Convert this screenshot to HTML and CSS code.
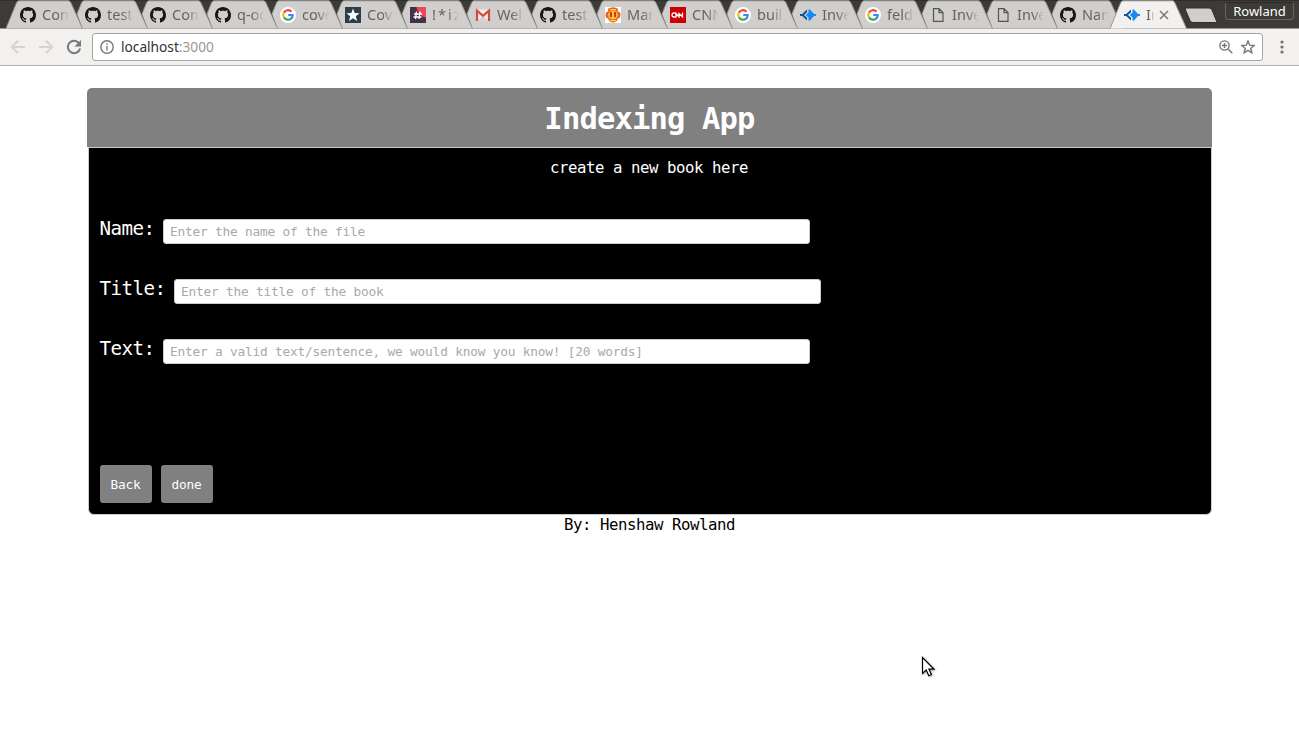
FILE: index.html
```html
<!DOCTYPE html>
<html lang="en">
<head>
<meta charset="utf-8">
<title>Indexing App</title>
<link rel="stylesheet" href="styles.css">
</head>
<body>
<svg class="defs" width="0" height="0">
  <symbol id="tab" viewBox="0 0 78 29"><path d="M0 28.500L10.500 3Q11.500 .8 13 .8H62.500Q64 .8 65 3L76.500 28.500"/></symbol>
  <symbol id="github" viewBox="0 0 16 16"><path fill="#181616" d="M8 0C3.580 0 0 3.580 0 8c0 3.540 2.290 6.530 5.470 7.590.4.070.55-.17.55-.38 0-.19-.01-.82-.01-1.490-2.010.37-2.530-.49-2.690-.94-.09-.23-.48-.94-.82-1.130-.28-.15-.68-.52-.01-.53.63-.01 1.080.58 1.230.82.72 1.210 1.870.87 2.330.66.070-.52.28-.87.51-1.070-1.780-.2-3.640-.89-3.640-3.950 0-.87.31-1.590.82-2.150-.08-.2-.36-1.020.08-2.120 0 0 .67-.21 2.200.82.640-.18 1.320-.27 2-.27s1.360.09 2 .27c1.530-1.040 2.200-.82 2.200-.82.440 1.100.160 1.920.080 2.120.510.560.820 1.270.820 2.150 0 3.070-1.870 3.750-3.650 3.950.290.250.540.730.540 1.480 0 1.070-.01 1.930-.01 2.200 0 .210.150.460.550.380A8.010 8.010 0 0 0 16 8c0-4.420-3.580-8-8-8z"/></symbol>
  <symbol id="google" viewBox="0 0 16 16"><circle cx="8" cy="8" r="8" fill="#fff"/><g fill="none" stroke-width="2.200"><path stroke="#ea4335" d="M3.900 5.600A4.700 4.700 0 0 1 11.400 4.700"/><path stroke="#fbbc05" d="M3.900 10.300A4.700 4.700 0 0 1 3.900 5.600"/><path stroke="#34a853" d="M11.200 11.500A4.700 4.700 0 0 1 3.900 10.300"/><path stroke="#4285f4" d="M8.200 8H12.700A4.700 4.700 0 0 1 11 11.700"/></g></symbol>
  <symbol id="star" viewBox="0 0 16 16"><path fill="#2c3e4a" d="M0 0h16v16H0z"/><path fill="#fff" d="M8 1.500l1.700 4.500 4.800.2-3.700 3 1.300 4.700L8 11.200l-4.100 2.700 1.300-4.700-3.700-3 4.800-.2z"/></symbol>
  <symbol id="hash" viewBox="0 0 16 16"><path fill="#453145" d="M0 0h16v16H0z"/><path fill="#ec4758" d="M6.500 0H16v10.500C12 10 8 7 6.500 0z"/><path d="M6.500 4.500L5.500 12M10 4.500L9 12M4 7h8M3.500 10h8" stroke="#fff" stroke-width="1.400"/></symbol>
  <symbol id="gmail" viewBox="0 0 16 16"><path fill="#eee" d="M1 2.500h14v11H1z"/><path fill="#d2d2d2" d="M3 13.500L8 9l5 4.500z"/><path fill="none" stroke="#d6493b" stroke-width="2.200" d="M2 14V3.600L8 8.800l6-5.200V14"/></symbol>
  <symbol id="united" viewBox="0 0 16 16"><path fill="#fff" d="M0 0h16v16H0z"/><path fill="#e8602a" d="M3 1.800Q8-1.200 13 1.800L12.700 4.500Q15.800 4.500 15.500 8T12.800 11.500Q12 15.500 8 15.500T3.200 11.500Q.5 11.500.5 8T3.300 4.500z"/><ellipse cx="8" cy="8" rx="5" ry="4.500" fill="#fdb52e"/><path fill="#d63621" d="M5 5h2v5H5zM9 5h2v5H9z"/><path fill="#ffd53c" d="M7 4h2v7.500H7zM5 2h6v1.200H5zM5 13h6v1.200H5z"/></symbol>
  <symbol id="cnn" viewBox="0 0 16 16"><path fill="#c00" d="M0 0h16v16H0z"/><path fill="none" stroke="#fff" stroke-width="1.300" d="M5.500 6H4Q2 6 2 8t2 2H6V6.500L9 9.800V6.500L12.500 9.800V5.500"/></symbol>
  <symbol id="diamond" viewBox="0 0 16 16"><path fill="#07559f" d="M0 7h2.200L7 2.500v2.700L4 8l3 2.800v2.700L2.200 9H0z"/><path fill="#168af0" d="M9.500 2L14 7h2v2h-2l-4.500 5L8.500 13v-2.500L5.800 8 8.500 5.500V3z"/></symbol>
  <symbol id="page" viewBox="0 0 16 16"><path fill="none" stroke="#555" stroke-width="1.200" d="M3.500 1.600h5.500l4 4v8.800H3.500zM9 1.600v4h4"/></symbol>
</svg>

<div class="tabstrip">
  <div class="tab"><svg class="shape"><use href="#tab"/></svg><svg class="icon"><use href="#github"/></svg><span>Com</span></div>
  <div class="tab"><svg class="shape"><use href="#tab"/></svg><svg class="icon"><use href="#github"/></svg><span>test</span></div>
  <div class="tab"><svg class="shape"><use href="#tab"/></svg><svg class="icon"><use href="#github"/></svg><span>Com</span></div>
  <div class="tab"><svg class="shape"><use href="#tab"/></svg><svg class="icon"><use href="#github"/></svg><span>q-oc</span></div>
  <div class="tab"><svg class="shape"><use href="#tab"/></svg><svg class="icon"><use href="#google"/></svg><span>cove</span></div>
  <div class="tab"><svg class="shape"><use href="#tab"/></svg><svg class="icon"><use href="#star"/></svg><span>Cov</span></div>
  <div class="tab"><svg class="shape"><use href="#tab"/></svg><svg class="icon"><use href="#hash"/></svg><span class="spaced">!*iz</span></div>
  <div class="tab"><svg class="shape"><use href="#tab"/></svg><svg class="icon"><use href="#gmail"/></svg><span>Wel</span></div>
  <div class="tab"><svg class="shape"><use href="#tab"/></svg><svg class="icon"><use href="#github"/></svg><span>test</span></div>
  <div class="tab"><svg class="shape"><use href="#tab"/></svg><svg class="icon"><use href="#united"/></svg><span>Man</span></div>
  <div class="tab"><svg class="shape"><use href="#tab"/></svg><svg class="icon"><use href="#cnn"/></svg><span>CNN</span></div>
  <div class="tab"><svg class="shape"><use href="#tab"/></svg><svg class="icon"><use href="#google"/></svg><span>buil</span></div>
  <div class="tab"><svg class="shape"><use href="#tab"/></svg><svg class="icon"><use href="#diamond"/></svg><span>Inve</span></div>
  <div class="tab"><svg class="shape"><use href="#tab"/></svg><svg class="icon"><use href="#google"/></svg><span>feld</span></div>
  <div class="tab"><svg class="shape"><use href="#tab"/></svg><svg class="icon"><use href="#page"/></svg><span>Inve</span></div>
  <div class="tab"><svg class="shape"><use href="#tab"/></svg><svg class="icon"><use href="#page"/></svg><span>Inve</span></div>
  <div class="tab"><svg class="shape"><use href="#tab"/></svg><svg class="icon"><use href="#github"/></svg><span>Nan</span></div>
  <div class="tab active"><svg class="shape"><use href="#tab"/></svg><svg class="icon"><use href="#diamond"/></svg><span>In</span><svg class="close" viewBox="0 0 10 10"><path d="M1 1l8 8M9 1L1 9"/></svg></div>
  <svg class="newtab" viewBox="0 0 34 17"><path d="M2.500 1H25Q27 1 28 3l4.500 11q.5 1.500-1 1.500H9Q7 15.500 6 13.500L1.500 3Q1 1 2.500 1z"/></svg>
  <div class="user">Rowland</div>
</div>

<div class="toolbar">
  <svg class="nav off" viewBox="0 0 16 16"><path d="M15 8H2M8 1.800L1.800 8 8 14.200"/></svg>
  <svg class="nav off" viewBox="0 0 16 16"><path d="M1 8h13M8 1.800L14.200 8 8 14.200"/></svg>
  <svg class="nav" viewBox="0 0 16 16"><path d="M13.200 4.500A6.200 6.200 0 1 0 14.100 9.500"/><path class="solid" d="M15 1v6.500H8.500z"/></svg>
  <div class="omnibox">
    <svg class="info" viewBox="0 0 14 14"><circle cx="7" cy="7" r="6.200"/><path d="M7 6v4.500M7 3.300v1.500"/></svg>
    <div class="url">localhost<em>:3000</em></div>
    <svg class="tool" viewBox="0 0 14 14"><circle cx="5.500" cy="5.500" r="4.600"/><path d="M9 9l4.300 4.300M3 5.500h5M5.500 3v5"/></svg>
    <svg class="tool fav" viewBox="0 0 14 14"><path d="M7 1l1.700 4.200 4.500.3-3.500 2.900 1.200 4.400L7 10.400l-3.900 2.400 1.200-4.400L.8 5.500l4.500-.3z"/></svg>
  </div>
  <svg class="menu" viewBox="0 0 4 14"><circle cx="2" cy="2" r="1.600"/><circle cx="2" cy="7" r="1.600"/><circle cx="2" cy="12" r="1.600"/></svg>
</div>

<main class="app">
  <h1 class="title">Indexing App</h1>
  <form class="panel">
    <p class="lead">create a new book here</p>
    <label class="row"><span class="name">Name:</span><input type="text" placeholder="Enter the name of the file"></label>
    <label class="row"><span class="name">Title:</span><input type="text" placeholder="Enter the title of the book"></label>
    <label class="row"><span class="name">Text:</span><input type="text" placeholder="Enter a valid text/sentence, we would know you know! [20 words]"></label>
    <div class="actions"><button type="button">Back</button><button type="button">done</button></div>
  </form>
  <footer class="by">By: Henshaw Rowland</footer>
</main>
<svg class="cursor" viewBox="0 0 14 22"><path d="M1.500 1.500v16l3.700-3.400 2.600 5.600 2.600-1.200-2.500-5.400h5z"/></svg>
</body>
</html>
```

FILE: styles.css
```css
* { box-sizing: border-box; }
body {
  margin: 0;
  height: 744px;
  overflow: hidden;
  background: #fff;
  font-family: "DejaVu Sans Mono", monospace;
}
.defs { position: absolute; }

/* Tab strip */
.tabstrip {
  display: flex;
  height: 29px;
  padding-left: 6px;
  background: linear-gradient(#2f2e2b 1px, #3c3b37 1px);
  border-bottom: 1px solid #999795;
  font: 14.500px "Noto Sans", "Open Sans", sans-serif;
  color: #65635f;
}
.tab {
  position: relative;
  display: flex;
  align-items: center;
  flex: 0 0 65px;
  height: 29px;
  padding: 1px 0 0 14px;
}
.shape {
  position: absolute;
  left: 0;
  top: 0;
  width: 78px;
  height: 29px;
  fill: #d1cfcd;
  stroke: #999795;
}
/* Each tab's right slope covers the start of the next tab. */
.tab + .tab:not(.active) .shape {
  clip-path: polygon(6.500px 0, 78px 0, 78px 29px, 12px 29px, 6px 14px);
}
.icon { position: relative; flex: none; width: 16px; height: 16px; }
.tab span {
  position: relative;
  width: 27px;
  margin-left: 6px;
  overflow: hidden;
  white-space: nowrap;
  line-height: 20px;
  top: -1px;
  -webkit-mask-image: linear-gradient(90deg, #000 55%, transparent);
  mask-image: linear-gradient(90deg, #000 55%, transparent);
}
.tab .spaced { letter-spacing: 2px; }
.active { z-index: 2; margin-left: -1px; }
.active .shape { fill: #f2f1f0; }
.active span { width: 8px; }
.close {
  position: relative;
  width: 10px;
  height: 10px;
  margin-left: 5px;
  stroke: #777;
  stroke-width: 1.500;
}
.newtab {
  flex: none;
  width: 34px;
  height: 17px;
  margin: 7px 0 0 9px;
  fill: #d1cfcd;
  stroke: #2f2e2b;
}
.user {
  flex: none;
  width: 69px;
  height: 18px;
  margin: 2px 5px 0 auto;
  border: 1px solid #66645e;
  border-top-color: #2b2a27;
  border-radius: 3px;
  color: #fff;
  font-size: 13px;
  line-height: 17px;
  text-align: center;
}

/* Toolbar */
.toolbar {
  display: flex;
  align-items: center;
  gap: 12px;
  height: 37px;
  padding: 0 0 0 10px;
  background: #f2f1f0;
  border-bottom: 1px solid #b2b1b0;
}
.nav { flex: none; width: 16px; height: 16px; fill: none; stroke: #777; stroke-width: 2; }
.off { stroke: #d5d4d3; }
.solid { fill: #777; stroke: none; }
.omnibox {
  display: flex;
  align-items: center;
  width: 1171px;
  height: 28px;
  margin-left: -2px;
  padding: 0 7px;
  background: #fff;
  border: 1px solid #a6a5a4;
  border-radius: 3px;
}
.info, .tool { flex: none; width: 14px; height: 14px; fill: none; stroke: #777; stroke-width: 1.400; }
.url {
  flex: 1;
  margin-left: 7px;
  color: #333;
  font: 13.700px/20px "Noto Sans", "Open Sans", sans-serif;
}
.url em { color: #999; font-style: normal; }
.fav { margin-left: 8px; }
.menu { width: 4px; height: 14px; margin-left: 5px; fill: #707070; }

/* Page */
.app { width: 1125px; margin: 22px 0 0 87px; }
.title {
  height: 59px;
  margin: 0;
  background: #808080;
  border-radius: 5px 5px 0 0;
  color: #fff;
  font-size: 30.500px;
  letter-spacing: -.84px;
  line-height: 61px;
  text-align: center;
}
.panel {
  height: 368px;
  margin-left: 1px;
  padding: 0 11px;
  background: #000;
  border: 1px solid #ccc;
  border-radius: 0 0 6px 6px;
  color: #fff;
}
.lead {
  margin: 0 2px 0 0;
  padding-top: 10px;
  font-size: 15.700px;
  letter-spacing: -.45px;
  line-height: 20px;
  text-align: center;
}
.row {
  display: flex;
  height: 25px;
  margin-bottom: 35px;
  font-size: 19.200px;
  letter-spacing: -.56px;
  line-height: 19px;
}
.name { margin-left: -.5px; }
.lead + .row { margin-top: 41px; }
.row input {
  width: 647px;
  height: 25px;
  margin-left: 8.500px;
  padding: 0 6px;
  border: 1px solid #ccc;
  border-radius: 3px;
  background: #fff;
  font: 12.800px "DejaVu Sans Mono", monospace;
  letter-spacing: -.2px;
}
.row input::placeholder { color: #a9a9a9; opacity: 1; }
.actions { display: flex; gap: 9px; margin-top: 101px; }
.actions button {
  width: 52px;
  height: 38px;
  padding: 0 1px 0 0;
  border: 0;
  border-radius: 3px;
  background: #808080;
  color: #fff;
  font: 12.800px "DejaVu Sans Mono", monospace;
  letter-spacing: -.2px;
}
.by {
  color: #000;
  font-size: 15.700px;
  letter-spacing: -.45px;
  line-height: 19px;
  text-align: center;
}

/* Pointer lies over the page */
.cursor {
  position: absolute;
  left: 921px;
  top: 656px;
  width: 14px;
  height: 22px;
  fill: #fff;
  stroke: #000;
  stroke-width: 1.200;
  filter: drop-shadow(1px 1px 1px rgba(0, 0, 0, .3));
}
```
